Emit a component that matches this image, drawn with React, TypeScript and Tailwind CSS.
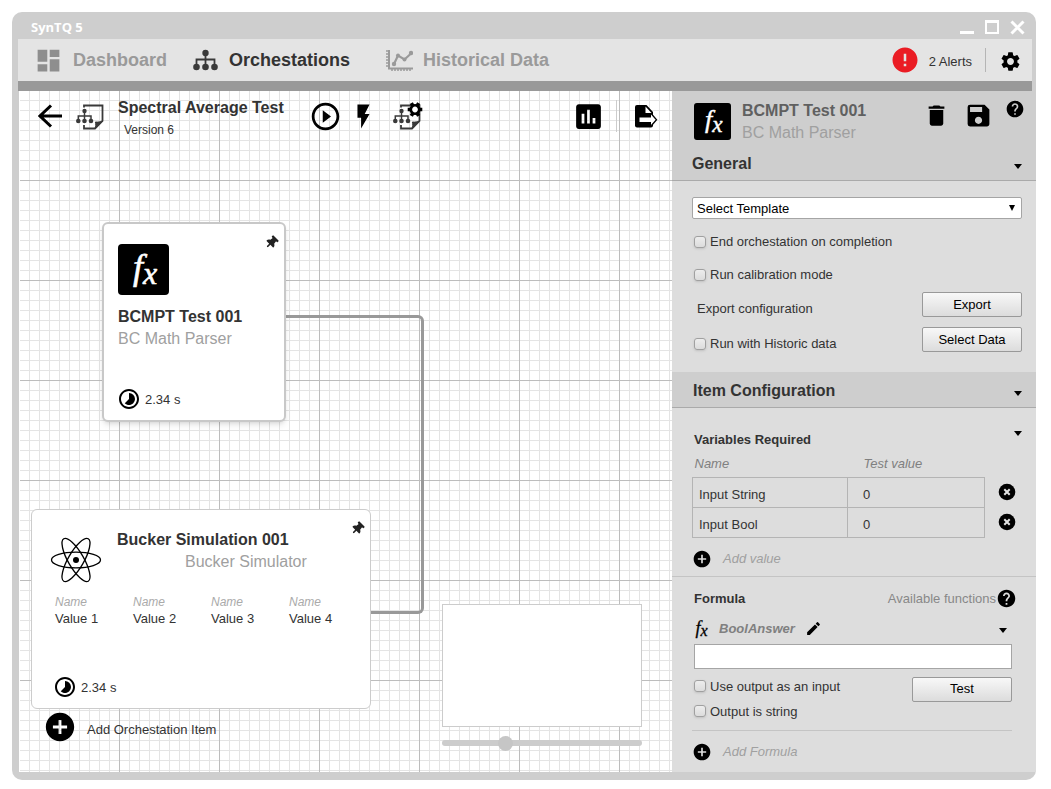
import { useState } from 'react';
import type { ReactNode } from 'react';
import {
  MdAddCircle,
  MdAssessment,
  MdDashboard,
  MdDelete,
  MdEdit,
  MdError,
  MdFlashOn,
  MdHelp,
  MdPlayCircleOutline,
  MdSave,
  MdSettings,
  MdTimelapse,
} from 'react-icons/md';
import { FaThumbtack } from 'react-icons/fa';

const simulatorValues = ['Value 1', 'Value 2', 'Value 3', 'Value 4'];

const variables = [
  { name: 'Input String', value: '0' },
  { name: 'Input Bool', value: '0' },
];

function TreeIcon() {
  return (
    <svg width="26" height="22" viewBox="0 0 26 22" fill="#3a3a3a" aria-hidden="true">
      <circle cx="12.500" cy="4" r="3.200" />
      <circle cx="3.500" cy="18" r="3.300" />
      <circle cx="12.500" cy="18" r="3.300" />
      <circle cx="21.500" cy="18" r="3.300" />
      <path d="M3.500 17v-6.500h18V17M12.500 4v13" fill="none" stroke="#3a3a3a" strokeWidth="1.800" />
    </svg>
  );
}

function ChartIcon() {
  return (
    <svg width="27" height="23" viewBox="0 0 27 23" fill="none" stroke="#9a9a9a" aria-hidden="true">
      <path d="M3 1v18.500H27" strokeWidth="2" />
      <path d="M0 2h3M0 5h3M0 8h3M0 11h3M0 14h3M0 17h3" strokeWidth="1.500" />
      <path d="M6 20v2M9 20v2M12 20v2M15 20v2M18 20v2M21 20v2M24 20v2" strokeWidth="1.500" />
      <path d="M8 15l4-8.500 6.500 4 6.500-6" strokeWidth="2.200" />
      <g fill="#9a9a9a" stroke="none">
        <circle cx="8" cy="15" r="2.200" />
        <circle cx="12" cy="6.500" r="2" />
        <circle cx="18.500" cy="10.500" r="2" />
        <circle cx="25" cy="4" r="2.200" />
      </g>
    </svg>
  );
}

function FlowDocIcon({ gear = false }: { gear?: boolean }) {
  return (
    <svg width="30" height="28" viewBox="0 0 30 28" fill="none" aria-hidden="true">
      <path d="M8 5.500V3.500h18.500V19l-7.500 7.500H8V23" stroke="#3a3a3a" strokeWidth="1.800" />
      <path d="M26.500 19l-7.500 7.500c.9-2.200 1-4 .4-6.500 2.500.3 4.900 0 7.100-1z" fill="#3a3a3a" stroke="#3a3a3a" />
      <path d="M2.300 18.500v-4.500H15v4.500M8.500 9.500v9" stroke="#3a3a3a" strokeWidth="1.500" />
      <g fill="#3a3a3a">
        <circle cx="8.500" cy="9" r="2.200" />
        <circle cx="2.300" cy="19" r="2.300" />
        <circle cx="8.500" cy="19" r="2.300" />
        <circle cx="15" cy="19" r="2.300" />
      </g>
      {gear && (
        <g transform="translate(22 7.500)">
          <path
            d="M-7.300 0H7.300M-3.700-6.300L3.700 6.300M3.700-6.300L-3.700 6.300"
            stroke="#000"
            strokeWidth="3.600"
          />
          <circle r="4.200" fill="#fff" stroke="#000" strokeWidth="2.600" />
        </g>
      )}
    </svg>
  );
}

function ExportDocIcon() {
  return (
    <svg width="24" height="24" viewBox="0 0 24 24" aria-hidden="true">
      <path d="M3 1h9.500L19 8v13.500a2 2 0 0 1-2 2H3a2 2 0 0 1-2-2V3a2 2 0 0 1 2-2z" fill="#000" />
      <path d="M11.500 2.500V9h6z" fill="#fff" />
      <path d="M5.500 13.500H17v-3.500l5.500 5.800-5.500 5.700V18H5.500z" fill="#fff" />
      <path d="M17.500 10l5 5.800-5 5.700" fill="none" stroke="#000" strokeWidth="1.300" />
    </svg>
  );
}

function RemoveIcon() {
  return (
    <svg width="20" height="20" viewBox="-10 -10 20 20" aria-hidden="true">
      <circle r="8.300" fill="#000" />
      <path d="M-2.700-2.700L2.700 2.700M2.700-2.700L-2.700 2.700" stroke="#e4e4e4" strokeWidth="2" />
    </svg>
  );
}

function FxTile({ size }: { size: number }) {
  return (
    <svg width={size} height={size} viewBox="0 0 51 51" className="shrink-0" aria-hidden="true">
      <rect width="51" height="51" rx="4" fill="#000" />
      <FxGlyph fill="#fff" />
    </svg>
  );
}

function FxGlyph({ fill }: { fill: string }) {
  return (
    <g
      fill={fill}
      stroke={fill}
      strokeWidth="0.600"
      fontStyle="italic"
      fontFamily="'Liberation Serif', 'Times New Roman', serif"
    >
      <text x="15" y="35" fontSize="36">f</text>
      <text x="25" y="40" fontSize="32">x</text>
    </g>
  );
}

function AtomIcon() {
  return (
    <svg width="52" height="48" viewBox="-26 -24 52 48" fill="none" stroke="#000" aria-hidden="true">
      <ellipse rx="24.500" ry="7.800" strokeWidth="1.300" />
      <ellipse rx="24.500" ry="7.800" strokeWidth="1.300" transform="rotate(60)" />
      <ellipse rx="24.500" ry="7.800" strokeWidth="1.300" transform="rotate(120)" />
      <circle r="3" fill="#000" stroke="none" />
    </svg>
  );
}

function Caret() {
  return (
    <svg width="8" height="5" viewBox="0 0 8 5" className="block" aria-hidden="true">
      <path d="M0 0h8L4 5z" fill="#000" />
    </svg>
  );
}

function CheckField({ label }: { label: string }) {
  return (
    <label className="flex items-center gap-1">
      <input
        type="checkbox"
        className="h-3 w-3 appearance-none rounded-[3px] border border-[#a0a0a0] bg-gradient-to-b from-[#ededed] to-[#dcdcdc] shadow-sm checked:bg-gray-600"
      />
      <span className="pt-px">{label}</span>
    </label>
  );
}

function PanelButton({ children }: { children: ReactNode }) {
  return (
    <button className="h-[25px] w-[100px] rounded-xs border border-[#999] bg-gradient-to-b from-[#f8f8f8] to-[#dcdcdc] text-black">
      {children}
    </button>
  );
}

function RunTime() {
  return (
    <div className="flex items-center gap-1">
      <MdTimelapse size={24} color="#000" />
      <span className="pt-px">2.34 s</span>
    </div>
  );
}

function PinButton() {
  return (
    <button aria-label="Pin item" className="absolute top-[11px] right-[5px] p-px text-[#222]">
      <FaThumbtack size={13} className="rotate-45" />
    </button>
  );
}

function TitleBar() {
  return (
    <header className="flex h-[27px] items-center justify-between pt-1 pr-[11px] pl-[19px]">
      <h1 className="font-['Open_Sans',sans-serif] text-[13px] font-bold text-white">SynTQ 5</h1>
      <div className="flex gap-[10px]">
        <button aria-label="Minimize">
          <svg width="15" height="15" viewBox="0 0 15 15"><path d="M0 11h14v3H0z" fill="#fff" /></svg>
        </button>
        <button aria-label="Maximize">
          <svg width="15" height="15" viewBox="0 0 15 15"><path d="M1 2h12v11H1z" fill="none" stroke="#fff" strokeWidth="2" /><path d="M0 0h14v3H0z" fill="#fff" /></svg>
        </button>
        <button aria-label="Close">
          <svg width="15" height="15" viewBox="0 0 15 15"><path d="M1.500 1.500l12 12M13.500 1.500l-12 12" stroke="#fff" strokeWidth="3" /></svg>
        </button>
      </div>
    </header>
  );
}

function MainNav() {
  return (
    <div className="mr-1 ml-1.5 flex h-[52px] items-center justify-between border-b-[10px] border-[#999] bg-[#e4e4e4]">
      <nav className="flex items-center gap-[26px] pl-4 text-lg font-bold text-[#9a9a9a]">
        <a href="#dashboard" className="flex items-center gap-[10px]">
          <MdDashboard size={29} color="#8e8e8e" />
          Dashboard
        </a>
        <a href="#orchestations" className="flex items-center gap-[10px] text-[#333]">
          <TreeIcon />
          Orchestations
        </a>
        <a href="#historical" className="ml-[10px] flex items-center gap-[10px]">
          <ChartIcon />
          Historical Data
        </a>
      </nav>
      <div className="flex items-center pr-[10px]">
        <button className="flex items-center gap-[9px]">
          <MdError size={30} color="#ea1c24" />
          <span className="pt-1">2 Alerts</span>
        </button>
        <div className="mr-[13px] ml-[13px] h-6 w-px bg-[#b5b5b5]" />
        <button aria-label="Settings" className="pt-[3px]">
          <MdSettings size={23} color="#000" />
        </button>
      </div>
    </div>
  );
}

function Toolbar() {
  return (
    <div className="flex h-[50px] items-center pr-[14px] pl-[18px] text-black">
      <button aria-label="Back">
        <svg width="24" height="24" viewBox="0 0 24 24" fill="none" stroke="#000" strokeWidth="3">
          <path d="M1.500 12H24M13 1.500L2 12l11 10.500" />
        </svg>
      </button>
      <div className="ml-[14px] flex items-center gap-3">
        <FlowDocIcon />
        <div className="pt-1 text-[#333]">
          <h2 className="text-base leading-5 font-bold">Spectral Average Test</h2>
          <p className="mt-1 pl-1.5 text-xs leading-4">Version 6</p>
        </div>
      </div>
      <button aria-label="Run" className="ml-[25px]">
        <MdPlayCircleOutline size={33} />
      </button>
      <button aria-label="Trigger" className="ml-[7px]">
        <MdFlashOn size={29} />
      </button>
      <button aria-label="Orchestation settings" className="ml-[15px]">
        <FlowDocIcon gear />
      </button>
      <div className="ml-auto flex items-center">
        <button aria-label="Results">
          <MdAssessment size={33} />
        </button>
        <div className="mr-[17px] ml-[11px] h-8 w-px bg-[#ccc]" />
        <button aria-label="Export orchestation">
          <ExportDocIcon />
        </button>
      </div>
    </div>
  );
}

function Canvas() {
  const [zoom, setZoom] = useState(30);

  return (
    <main className="relative flex-1 border-l border-white bg-white bg-[linear-gradient(to_right,transparent_99px,#bdbdbd_99px),linear-gradient(to_bottom,transparent_99px,#bdbdbd_99px),linear-gradient(to_right,transparent_9px,#e4e4e4_9px),linear-gradient(to_bottom,transparent_9px,#e4e4e4_9px)] bg-[size:100px_100px,100px_100px,10px_10px,10px_10px] bg-[position:0_0,0_-10px,0_0,0_0]">
      <Toolbar />

      {/* Connector between the two items */}
      <div className="absolute top-[224px] left-[264px] h-[299px] w-[140px] rounded-r-md border-[3px] border-l-0 border-[#999]" />

      <section className="absolute top-[131px] left-[82px] flex h-[200px] w-[184px] flex-col rounded-md border-2 border-[#c8c8c8] bg-white pt-5 pb-[9px] pl-[14px] shadow-md">
        <PinButton />
        <FxTile size={51} />
        <h3 className="mt-[11px] text-base leading-[22px] font-bold">BCMPT Test 001</h3>
        <p className="text-base leading-[22px] text-[#a0a0a0]">BC Math Parser</p>
        <div className="mt-auto -ml-px">
          <RunTime />
        </div>
      </section>

      <section className="absolute top-[418px] left-[11px] flex h-[200px] w-[340px] flex-col rounded-md border border-[#ccc] bg-white pt-[19px] pb-[9px] pl-[18px]">
        <PinButton />
        <div className="flex gap-[15px]">
          <div className="pt-[7px]">
            <AtomIcon />
          </div>
          <div>
            <h3 className="text-base leading-[22px] font-bold">Bucker Simulation 001</h3>
            <p className="pl-[68px] text-base leading-[22px] text-[#a0a0a0]">Bucker Simulator</p>
          </div>
        </div>
        <dl className="mt-[10px] ml-[5px] grid w-[312px] grid-cols-4">
          {simulatorValues.map((value) => (
            <div key={value}>
              <dt className="text-xs leading-4 text-[#aaa] italic">Name</dt>
              <dd className="leading-[18px]">{value}</dd>
            </div>
          ))}
        </dl>
        <div className="mt-auto ml-[3px]">
          <RunTime />
        </div>
      </section>

      <button className="absolute top-[619px] left-[23px] flex items-center gap-[10px]">
        <MdAddCircle size={34} color="#000" />
        <span className="pt-[5px]">Add Orchestation Item</span>
      </button>

      {/* Minimap and zoom */}
      <div className="absolute right-[30px] bottom-[21px] flex w-[200px] flex-col gap-[9px]">
        <div className="h-[123px] border border-[#ccc] bg-white" />
        <input
          type="range"
          aria-label="Zoom"
          value={zoom}
          onChange={(e) => setZoom(Number(e.target.value))}
          className="h-[15px] w-full appearance-none bg-transparent [&::-webkit-slider-runnable-track]:h-1.5 [&::-webkit-slider-runnable-track]:rounded-full [&::-webkit-slider-runnable-track]:bg-[#ccc] [&::-webkit-slider-thumb]:-mt-1 [&::-webkit-slider-thumb]:h-[15px] [&::-webkit-slider-thumb]:w-[15px] [&::-webkit-slider-thumb]:appearance-none [&::-webkit-slider-thumb]:rounded-full [&::-webkit-slider-thumb]:bg-[#c6c6c6]"
        />
      </div>
    </main>
  );
}

function PanelHeader() {
  return (
    <div className="h-[90px] border-b border-[#aaa] bg-[#cecece] pt-2 pr-[11px] pl-5">
      <div className="flex h-[44px] items-start">
        <div className="pt-1 pl-0.5">
          <FxTile size={37} />
        </div>
        <div className="ml-[11px] flex-1 pt-px text-base leading-[22px]">
          <h2 className="font-bold text-[#606060]">BCMPT Test 001</h2>
          <p className="text-[#a0a0a0]">BC Math Parser</p>
        </div>
        <div className="flex items-start text-black">
          <button aria-label="Delete item" className="pt-[3px]">
            <MdDelete size={27} />
          </button>
          <button aria-label="Save item" className="ml-[14px] pt-0.5">
            <MdSave size={29} />
          </button>
          <button aria-label="Help" className="ml-3">
            <MdHelp size={20} />
          </button>
        </div>
      </div>
      <div className="mt-[5px] pr-[3px]">
        <SectionTitle title="General" />
      </div>
    </div>
  );
}

function SectionTitle({ title }: { title: string }) {
  return (
    <div className="flex h-8 items-center justify-between">
      <h3 className="text-base font-bold">{title}</h3>
      <button aria-label={`Toggle ${title}`} className="pt-1">
        <Caret />
      </button>
    </div>
  );
}

function GeneralSection() {
  return (
    <div className="pt-4 pr-[14px] pb-5 pl-5">
      <div className="relative">
        <select
          aria-label="Template"
          className="block h-[22px] w-full appearance-none rounded-xs border border-[#a5a5a5] bg-white pt-px pl-1 text-black"
        >
          <option>Select Template</option>
        </select>
        <svg width="6" height="6" viewBox="0 0 6 6" className="pointer-events-none absolute top-2 right-[7px]" aria-hidden="true">
          <path d="M0 0h6L3 6z" fill="#000" />
        </svg>
      </div>
      <div className="pl-0.5">
        <div className="mt-3 h-5 leading-5">
          <CheckField label="End orchestation on completion" />
        </div>
        <div className="mt-[13px] h-5 leading-5">
          <CheckField label="Run calibration mode" />
        </div>
        <div className="mt-2 flex items-end justify-between leading-4">
          <span className="pl-[3px]">Export configuration</span>
          <PanelButton>Export</PanelButton>
        </div>
        <div className="mt-[10px] flex items-end justify-between leading-4">
          <CheckField label="Run with Historic data" />
          <PanelButton>Select Data</PanelButton>
        </div>
      </div>
    </div>
  );
}

function VariablesSection() {
  return (
    <div className="border-b border-[#c4c4c4] pt-[23px] pr-[14px] pb-[7px] pl-5">
      <div className="flex items-start justify-between pl-0.5">
        <h4 className="leading-[18px] font-bold">Variables Required</h4>
        <button aria-label="Toggle variables">
          <Caret />
        </button>
      </div>
      <table className="w-full table-fixed border-collapse">
        <thead>
          <tr className="h-7 text-left text-[#808080] italic">
            <th className="w-[155px] pt-px pl-0.5 font-normal">Name</th>
            <th className="w-[137px] pt-px pl-4 font-normal">Test value</th>
            <th aria-label="Remove" />
          </tr>
        </thead>
        <tbody>
          {variables.map((variable) => (
            <tr key={variable.name} className="h-[30px]">
              <td className="border border-[#b4b4b4] pt-1.5 pl-[6px]">{variable.name}</td>
              <td className="border border-[#b4b4b4] pt-1.5 pl-[15px]">{variable.value}</td>
              <td className="pl-3 text-black">
                <button aria-label={`Remove ${variable.name}`} className="block">
                  <RemoveIcon />
                </button>
              </td>
            </tr>
          ))}
        </tbody>
      </table>
      <AddButton label="Add value" />
    </div>
  );
}

function AddButton({ label }: { label: string }) {
  return (
    <button className="mt-[11px] flex h-5 items-center gap-[11px] text-[#a0a0a0] italic">
      <MdAddCircle size={20} color="#000" />
      <span className="pt-px">{label}</span>
    </button>
  );
}

function FormulaSection() {
  return (
    <div className="pt-3 pr-6 pb-[10px] pl-5">
      <div className="pl-0.5">
        <div className="-mr-[5px] flex h-5 items-center justify-between">
          <h4 className="font-bold">Formula</h4>
          <button className="flex items-center text-[#888]">
            Available functions
            <MdHelp size={21} color="#000" />
          </button>
        </div>
        <div className="mt-[10px] flex h-5 items-center text-[#808080]">
          <svg width="21" height="25" viewBox="12 0 42 50" className="shrink-0" aria-hidden="true">
            <FxGlyph fill="#000" />
          </svg>
          <label htmlFor="formula" className="ml-1 pt-px font-bold italic">BoolAnswer</label>
          <button aria-label="Rename formula" className="ml-[10px] text-black">
            <MdEdit size={17} />
          </button>
          <button aria-label="Toggle formula" className="mr-[5px] ml-auto pt-1">
            <Caret />
          </button>
        </div>
        <input
          id="formula"
          type="text"
          className="mt-[5px] block h-[25px] w-full border border-[#a5a5a5] bg-white px-1"
        />
        <div className="mt-2 flex items-start justify-between">
          <div className="flex flex-col gap-[6px] leading-[18px]">
            <CheckField label="Use output as an input" />
            <CheckField label="Output is string" />
          </div>
          <PanelButton>Test</PanelButton>
        </div>
      </div>
      <hr className="mt-[9px] border-[#c4c4c4]" />
      <AddButton label="Add Formula" />
    </div>
  );
}

export default function App() {
  return (
    <div className="flow-root min-h-screen bg-white font-['Liberation_Sans',Arial,sans-serif] text-[13px] text-[#333]">
      <div className="mt-3 mr-[15px] mb-[9px] ml-3 overflow-hidden rounded-[10px] bg-[#cecece] pb-2">
        <TitleBar />
        <MainNav />
        <div className="flex pl-[7px]">
          <Canvas />
          <aside className="w-[364px] shrink-0 bg-[#ddd]">
            <PanelHeader />
            <GeneralSection />
            <div className="border-b border-[#aaa] bg-[#cecece] pt-[3px] pr-[14px] pl-[21px]">
              <SectionTitle title="Item Configuration" />
            </div>
            <VariablesSection />
            <FormulaSection />
          </aside>
        </div>
      </div>
    </div>
  );
}
